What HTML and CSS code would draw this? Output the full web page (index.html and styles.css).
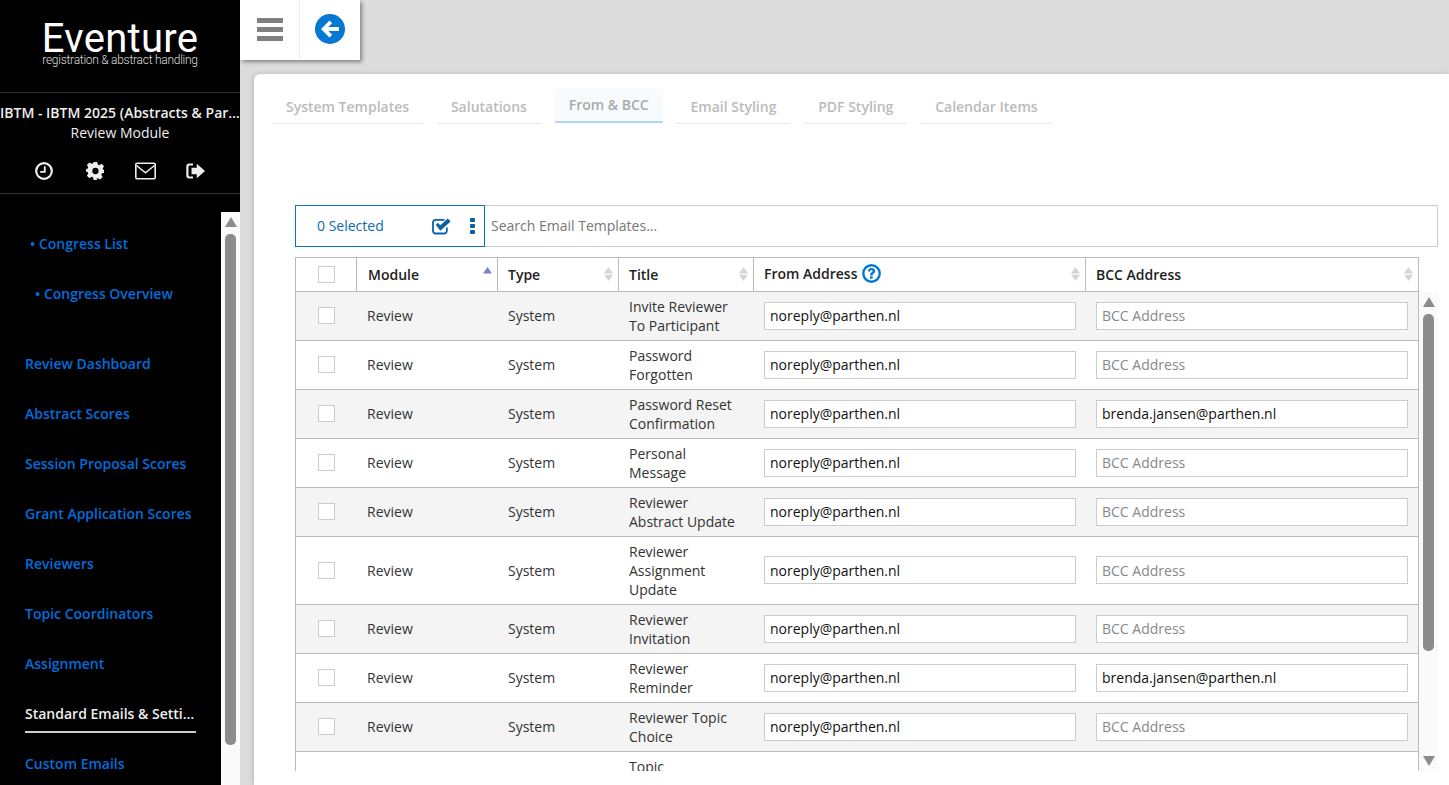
FILE: index.html
```html
<!DOCTYPE html>
<html lang="en">
<head>
<meta charset="utf-8">
<title>Standard Emails &amp; Settings</title>
<link rel="stylesheet" href="styles.css">
</head>
<body>
<div class="app">
  <aside class="sidebar">
    <div class="logo">
      <div class="logo-name">Eventure</div>
      <div class="logo-tag">registration &amp; abstract handling</div>
    </div>
    <div class="event">
      <div class="event-name">IBTM - IBTM 2025 (Abstracts &amp; Participants)</div>
      <div class="event-module">Review Module</div>
      <div class="event-icons">
        <svg class="side-icon" width="18" height="18" viewBox="0 0 18 18"><circle cx="9" cy="9" r="7.800" fill="none" stroke="currentColor" stroke-width="2.200"/><path d="M9.800 4.200v5.700H5.200" fill="none" stroke="currentColor" stroke-width="1.800"/></svg>
        <svg class="side-icon side-icon-gear" width="18" height="18" viewBox="0 0 20 20"><path fill="currentColor" fill-rule="evenodd" d="M8 0h4l.6 2.800 1.700.7 2.400-1.500 2.800 2.800-1.500 2.400.7 1.700L20 8v4l-2.800.6-.7 1.700 1.500 2.400-2.800 2.800-2.400-1.500-1.700.7L12 20H8l-.6-2.800-1.700-.7-2.400 1.500L.5 15.200 2 12.800l-.7-1.700L-1 10.500V8l2.300-.6.700-1.700L.5 3.300 3.300.5l2.400 1.500 1.700-.7zM10 6.500a3.500 3.500 0 1 0 0 7 3.500 3.500 0 0 0 0-7z" transform="translate(.5 0)"/></svg>
        <svg class="side-icon" width="21" height="18" viewBox="0 0 21 18"><rect x=".8" y="1.300" width="19.400" height="15.400" rx="1.200" fill="none" stroke="currentColor" stroke-width="1.600"/><path d="M1.500 3.500 10.500 10.800l9-7.300" fill="none" stroke="currentColor" stroke-width="1.600"/></svg>
        <svg class="side-icon side-icon-out" width="19" height="16" viewBox="0 0 19 16"><path fill="currentColor" d="M7 .5H3.300A3 3 0 0 0 .3 3.500v9a3 3 0 0 0 3 3H7v-2H3.500a1 1 0 0 1-1-1V3.500a1 1 0 0 1 1-1H7zM10.800 .8 19 8l-8.200 7.200V11.300H5.500V4.700h5.300z"/></svg>
      </div>
    </div>
    <div class="side-body">
      <nav class="side-nav">
        <a class="nav-item nav-sub">• Congress List</a>
        <a class="nav-item nav-sub nav-sub-deep">• Congress Overview</a>
        <a class="nav-item nav-first">Review Dashboard</a>
        <a class="nav-item">Abstract Scores</a>
        <a class="nav-item">Session Proposal Scores</a>
        <a class="nav-item">Grant Application Scores</a>
        <a class="nav-item">Reviewers</a>
        <a class="nav-item">Topic Coordinators</a>
        <a class="nav-item">Assignment</a>
        <a class="nav-item nav-active"><span class="nav-active-label">Standard Emails &amp; Settings</span></a>
        <a class="nav-item">Custom Emails</a>
      </nav>
      <div class="scrollbar scrollbar-side">
        <svg class="sb-arrow" viewBox="0 0 12 10"><path d="M6 0 12 10H0z"/></svg>
        <div class="sb-thumb sb-thumb-side"></div>
      </div>
    </div>
  </aside>

  <main class="main">
    <div class="topbar">
      <button class="topbar-btn topbar-menu" type="button" aria-label="Menu">
        <span class="bar"></span><span class="bar"></span><span class="bar"></span>
      </button>
      <button class="topbar-btn topbar-back" type="button" aria-label="Back">
        <svg width="30" height="30" viewBox="0 0 30 30"><circle cx="15" cy="15" r="15" fill="#0578d2"/><path d="M14.500 6.500 6 15l8.500 8.500 2.700-2.700-3.900-3.800H24v-4H13.300l3.900-3.800z" fill="#fff"/></svg>
      </button>
    </div>

    <section class="card">
      <div class="tabs">
        <div class="tab">System Templates</div>
        <div class="tab">Salutations</div>
        <div class="tab tab-active">From &amp; BCC</div>
        <div class="tab">Email Styling</div>
        <div class="tab">PDF Styling</div>
        <div class="tab">Calendar Items</div>
      </div>

      <div class="tools">
        <div class="selected">
          <span class="selected-count">0 Selected</span>
          <svg class="selected-check" width="19" height="17" viewBox="0 0 19 17"><path d="M14.800 9.500v3.500a2.500 2.500 0 0 1-2.500 2.500H3.500A2.500 2.500 0 0 1 1 13V4.300A2.500 2.500 0 0 1 3.500 1.800h9" fill="none" stroke="#0a5fa5" stroke-width="1.800"/><path d="M3.800 6.800 5.800 4.800 8.300 7.300 15.800.6 18.600 3.400 8.300 12.800z" fill="#0a5fa5"/></svg>
          <span class="dots"><i></i><i></i><i></i></span>
        </div>
        <input class="search" type="text" placeholder="Search Email Templates...">
      </div>

      <div class="grid-wrap">
        <div class="row head">
          <div class="cell cell-check"><span class="check"></span></div>
          <div class="cell cell-module"><span>Module</span>
            <svg class="sort" viewBox="0 0 9 14"><path class="sort-active" d="M4.500 0 9 6.500H0z"/></svg></div>
          <div class="cell"><span>Type</span>
            <svg class="sort" viewBox="0 0 9 14"><path d="M4.500 0 9 6.500H0zM0 7.700h9L4.500 14z"/></svg></div>
          <div class="cell"><span>Title</span>
            <svg class="sort" viewBox="0 0 9 14"><path d="M4.500 0 9 6.500H0zM0 7.700h9L4.500 14z"/></svg></div>
          <div class="cell"><span class="from-label">From Address
            <svg class="help" width="19" height="19" viewBox="0 0 19 19"><circle cx="9.500" cy="9.500" r="8.200" fill="#fff" stroke="#0578d2" stroke-width="2.400"/><path d="M5.900 7.400c0-2.200 1.600-3.400 3.700-3.400 2 0 3.600 1.100 3.600 3.100 0 2.500-2.600 2.400-2.600 4.300H8.100c0-3 2.400-2.900 2.400-4.300 0-.6-.4-1-1-1-.7 0-1.100.5-1.100 1.300zM8.100 12.300h2.500v2.500H8.100z" fill="#0578d2"/></svg></span>
            <svg class="sort" viewBox="0 0 9 14"><path d="M4.500 0 9 6.500H0zM0 7.700h9L4.500 14z"/></svg></div>
          <div class="cell"><span>BCC Address</span>
            <svg class="sort" viewBox="0 0 9 14"><path d="M4.500 0 9 6.500H0zM0 7.700h9L4.500 14z"/></svg></div>
        </div>

        <div class="body-wrap">
          <div class="rows">
            <div class="row"><div class="cell cell-check"><span class="check"></span></div><div class="cell">Review</div><div class="cell">System</div><div class="cell cell-title">Invite Reviewer<br>To Participant</div><div class="cell"><input class="addr" value="noreply@parthen.nl"></div><div class="cell"><input class="addr" placeholder="BCC Address"></div></div>
            <div class="row"><div class="cell cell-check"><span class="check"></span></div><div class="cell">Review</div><div class="cell">System</div><div class="cell cell-title">Password<br>Forgotten</div><div class="cell"><input class="addr" value="noreply@parthen.nl"></div><div class="cell"><input class="addr" placeholder="BCC Address"></div></div>
            <div class="row"><div class="cell cell-check"><span class="check"></span></div><div class="cell">Review</div><div class="cell">System</div><div class="cell cell-title">Password Reset<br>Confirmation</div><div class="cell"><input class="addr" value="noreply@parthen.nl"></div><div class="cell"><input class="addr" value="brenda.jansen@parthen.nl"></div></div>
            <div class="row"><div class="cell cell-check"><span class="check"></span></div><div class="cell">Review</div><div class="cell">System</div><div class="cell cell-title">Personal<br>Message</div><div class="cell"><input class="addr" value="noreply@parthen.nl"></div><div class="cell"><input class="addr" placeholder="BCC Address"></div></div>
            <div class="row"><div class="cell cell-check"><span class="check"></span></div><div class="cell">Review</div><div class="cell">System</div><div class="cell cell-title">Reviewer<br>Abstract Update</div><div class="cell"><input class="addr" value="noreply@parthen.nl"></div><div class="cell"><input class="addr" placeholder="BCC Address"></div></div>
            <div class="row"><div class="cell cell-check"><span class="check"></span></div><div class="cell">Review</div><div class="cell">System</div><div class="cell cell-title">Reviewer<br>Assignment<br>Update</div><div class="cell"><input class="addr" value="noreply@parthen.nl"></div><div class="cell"><input class="addr" placeholder="BCC Address"></div></div>
            <div class="row"><div class="cell cell-check"><span class="check"></span></div><div class="cell">Review</div><div class="cell">System</div><div class="cell cell-title">Reviewer<br>Invitation</div><div class="cell"><input class="addr" value="noreply@parthen.nl"></div><div class="cell"><input class="addr" placeholder="BCC Address"></div></div>
            <div class="row"><div class="cell cell-check"><span class="check"></span></div><div class="cell">Review</div><div class="cell">System</div><div class="cell cell-title">Reviewer<br>Reminder</div><div class="cell"><input class="addr" value="noreply@parthen.nl"></div><div class="cell"><input class="addr" value="brenda.jansen@parthen.nl"></div></div>
            <div class="row"><div class="cell cell-check"><span class="check"></span></div><div class="cell">Review</div><div class="cell">System</div><div class="cell cell-title">Reviewer Topic<br>Choice</div><div class="cell"><input class="addr" value="noreply@parthen.nl"></div><div class="cell"><input class="addr" placeholder="BCC Address"></div></div>
            <div class="row"><div class="cell cell-check"><span class="check"></span></div><div class="cell">Review</div><div class="cell">System</div><div class="cell cell-title">Topic<br>Coordinator<br>Invitation</div><div class="cell"><input class="addr" value="noreply@parthen.nl"></div><div class="cell"><input class="addr" placeholder="BCC Address"></div></div>
          </div>
          <div class="scrollbar scrollbar-table">
            <svg class="sb-arrow" viewBox="0 0 12 10"><path d="M6 0 12 10H0z"/></svg>
            <div class="sb-thumb sb-thumb-table"></div>
            <svg class="sb-arrow sb-arrow-down" viewBox="0 0 12 10"><path d="M0 0h12L6 10z"/></svg>
          </div>
        </div>
      </div>
    </section>
  </main>
</div>
</body>
</html>
```

FILE: styles.css
```css
* { box-sizing: border-box; }
html, body { margin: 0; height: 100%; overflow: hidden; }
body { font-family: "Open Sans", "Liberation Sans", sans-serif; font-size: 14px; color: #333; }

.app { display: flex; height: 785px; }

/* Sidebar */
.sidebar { width: 240px; flex: none; background: #000; display: flex; flex-direction: column; overflow: hidden; }
.logo { height: 93px; border-bottom: 1px solid #333; padding-top: 24px; text-align: center; color: #fff; font-family: Roboto, sans-serif; }
.logo-name { font-size: 40px; line-height: 30px; letter-spacing: .3px; font-weight: 400; }
.logo-tag { font-size: 12px; line-height: 12px; font-weight: 300; letter-spacing: -.265px; color: #ddd; }
.event { height: 101px; border-bottom: 1px solid #333; padding-top: 10px; color: #eee; text-align: center; }
.event-name { font-weight: 600; line-height: 20px; white-space: nowrap; overflow: hidden; text-overflow: ellipsis; }
.event-module { line-height: 20px; }
.event-icons { display: flex; align-items: center; gap: 31px; padding-left: 35px; margin-top: 19px; }
.side-icon { flex: none; color: #eee; }
.side-icon-gear { margin-left: 2px; }
.side-icon-out { margin-left: -1px; }
.side-body { flex: 1; min-height: 0; margin-top: 18px; display: flex; }
.side-nav { flex: 1; min-width: 0; padding-top: 7px; overflow: hidden; }
.nav-item { display: block; height: 50px; line-height: 50px; padding-left: 25px; color: #006edc; font-weight: 600; white-space: nowrap; }
.nav-sub { padding-left: 30px; }
.nav-sub-deep { padding-left: 35px; }
.nav-first { margin-top: 20px; }
.nav-active { color: #eee; }
.nav-active-label { display: block; width: 171px; height: 44px; overflow: hidden; text-overflow: ellipsis; border-bottom: 2px solid #ccc; line-height: 50px; }

/* Scrollbars */
.scrollbar { width: 19px; flex: none; background: #fafafa; display: flex; flex-direction: column; align-items: center; padding-top: 5px; }
.sb-arrow { width: 12px; height: 10px; flex: none; fill: #8c8c8c; }
.sb-thumb { width: 11px; flex: none; background: #8c8c8c; border-radius: 5px; margin-top: 7px; }
.sb-thumb-side { height: 511px; }
.sb-thumb-table { height: 337px; }
.sb-arrow-down { margin-top: 105px; }

/* Main */
.main { flex: 1; min-width: 0; background: #dcdcdc; display: flex; flex-direction: column; }
.topbar { width: 120px; height: 60px; flex: none; display: flex; background: #fff; box-shadow: 2px 2px 4px rgba(0,0,0,.4); position: relative; }
.topbar-btn { border: 0; background: none; padding: 0; display: flex; align-items: center; justify-content: center; }
.topbar-menu { width: 60px; flex-direction: column; gap: 4px; border-right: 1px solid #eee; padding-bottom: 2px; }
.bar { display: block; width: 26px; height: 5px; background: #808080; }
.topbar-back { flex: 1; padding: 0 0 3px 0; }
.card { flex: 1; min-height: 0; margin: 14px 0 0 14px; background: #fff; border-radius: 6px 0 0 0; box-shadow: -1px 0 5px rgba(0,0,0,.16); padding: 15px 11px 0 18px; display: flex; flex-direction: column; overflow: hidden; }

/* Tabs */
.tabs { display: flex; gap: 13.8px; align-items: flex-start; height: 35px; flex: none; }
.tab { height: 35px; line-height: 36px; padding: 0 14px; font-weight: 600; color: #bbb; border-bottom: 1px solid #e8e8e8; white-space: nowrap; }
.tab-active { height: 34px; line-height: 32px; color: #aaa; background: #f8fbfe; border-bottom: 2px solid #aed6f5; }

/* Tools */
.tools { display: flex; height: 42px; flex: none; margin: 81px 0 0 23px; }
.selected { width: 190px; flex: none; border: 1px solid #0a72c4; display: flex; align-items: center; padding: 0 0 2px 21px; color: #0a6cb4; }
.selected-count { width: 115px; }
.selected-check { flex: none; margin-top: 2px; }
.dots { display: flex; flex-direction: column; gap: 2px; margin: 2px 0 0 19px; }
.dots i { display: block; width: 5px; height: 4px; background: #0a5fa5; border-radius: 1px; }
.search { flex: 1; min-width: 0; border: 1px solid #ccc; border-left: 0; padding: 0 6px 2px; font: inherit; outline: 0; }
.search::placeholder { color: #777; opacity: 1; }

/* Grid */
.grid-wrap { margin: 10px 0 0 23px; flex: 1; min-height: 0; display: flex; flex-direction: column; }
.row { display: grid; grid-template-columns: 61px 141px 121px 135px 332px 332px; border-bottom: 1px solid #bbb; background: #fff; }
.head { width: 1124px; flex: none; height: 35px; border: 1px solid #bbb; font-weight: 600; color: #222; }
.head .cell { display: flex; align-items: center; justify-content: space-between; padding: 0 5px 1px 10px; border-right: 1px solid #bbb; }
.head .cell:last-child { border-right: 0; }
.head .cell-module { padding-left: 11px; }
.head .cell-check { justify-content: flex-start; padding: 0 0 1px 22px; }
.body-wrap { flex: none; height: 479px; display: flex; overflow: hidden; }
.rows { width: 1124px; flex: none; border: 1px solid #bbb; border-width: 0 1px; }
.rows .row:nth-child(odd) { background: #f4f4f4; }
.rows .cell { display: flex; align-items: center; padding: 4.5px 10px 5.5px; line-height: 19px; min-height: 48px; }
.rows .cell-title { display: block; padding: 5px 10px; }
.rows .cell-check { justify-content: center; padding: 0 1px 1px 0; }
.check { display: block; width: 17px; height: 17px; border: 1px solid #ccc; background: #fff; }
.addr { display: block; width: 312px; height: 28px; border: 1px solid #ccc; background: #fff; padding: 0 5px; font: inherit; color: #111; outline: 0; }
.addr::placeholder { color: #888; opacity: 1; }
.sort { width: 9px; height: 14px; flex: none; fill: #d4d4d4; }
.sort-active { fill: #7d7ddb; }
.from-label { display: flex; align-items: center; gap: 5px; margin-top: -1px; }
.help { flex: none; }
```
